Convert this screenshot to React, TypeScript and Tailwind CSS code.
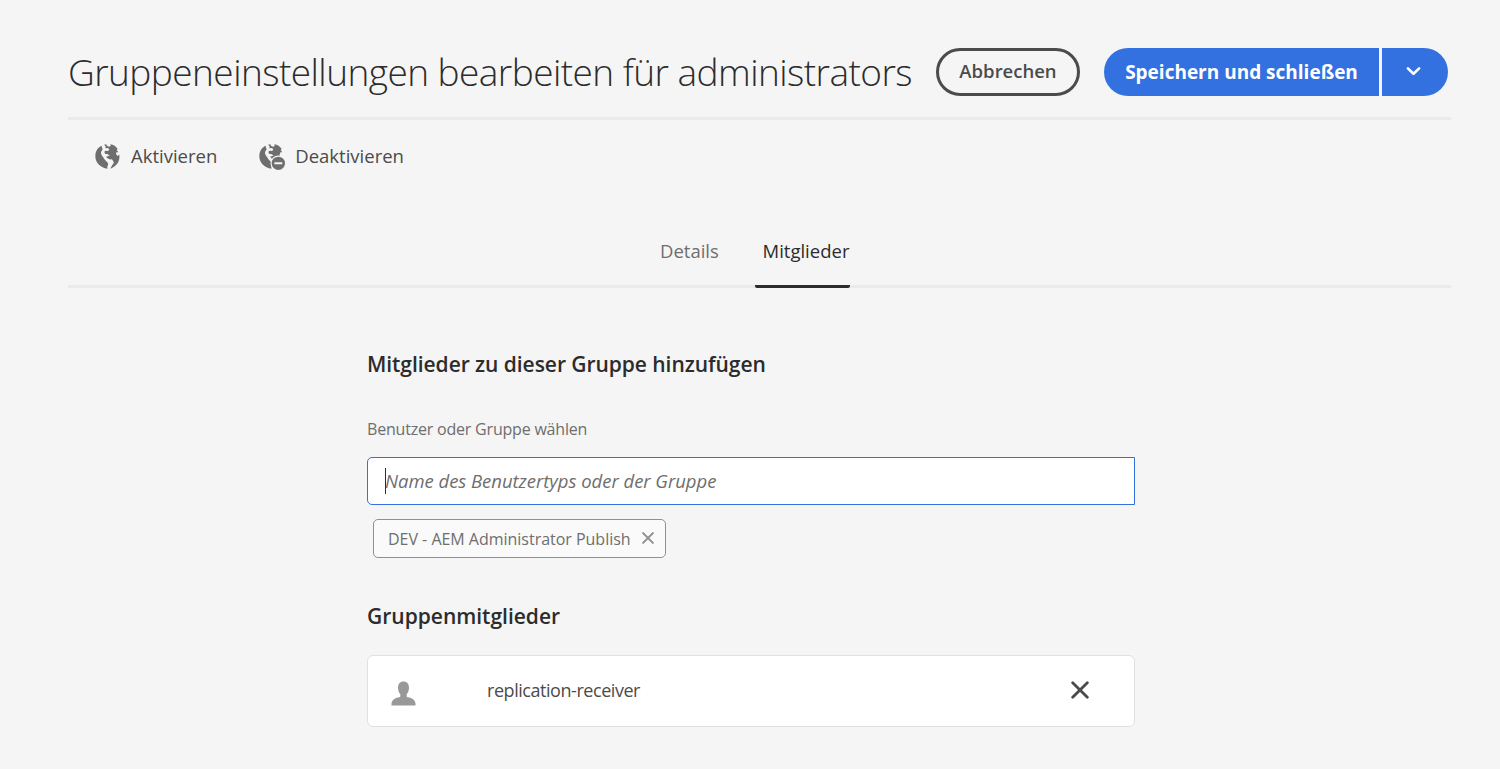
import type { ReactNode } from "react";

const LEFT_LAND =
  "M29 17C17 22 10 34 10 48c0 20 15 35 37 38.500C44 79 50 76 48 70C45 64 38 60 35 54C32 48 27 45 27 39C27 34 31 31 32 27C30 24 29 20 29 17Z";
const NORTH_LAND =
  "M36 14.500L43 12.500L45 17L51 20L56 18L55 12.500C65 14 72 19 77 27L74 30L79 37L73 37L72 42L64 44L60 48L52 47L48 43L39 41L37 35L41 32L49 33L52 27L46 24L40 25L41 19Z";
const SOUTH_LAND =
  "M42 50L52 47L60 43L72 41L76 48L82 44C85 63 73 80 55 86C59 79 60 74 66 68C63 65 64 61 59 58C52 59 48 56 42 50Z";

function Globe() {
  return (
    <svg viewBox="0 0 96 96" className="size-8 fill-[#6e6e6e]" aria-hidden="true">
      <path d={LEFT_LAND} />
      <path d={NORTH_LAND} />
      <path d={SOUTH_LAND} />
    </svg>
  );
}

function GlobeRemove() {
  return (
    <svg viewBox="0 0 96 96" className="size-8 fill-[#6e6e6e]" aria-hidden="true">
      <path d={LEFT_LAND} />
      <path d={NORTH_LAND} />
      <path d="M42 50L52 47L60 43L70 42L72 48L60 60L48 56Z" />
      <circle cx="67" cy="70" r="23.500" className="fill-[#f5f5f5]" />
      <circle cx="67" cy="70" r="20" />
      <rect x="55" y="67" width="24" height="6" rx="1" className="fill-[#f5f5f5]" />
    </svg>
  );
}

function Action({ icon, children }: { icon: ReactNode; children: ReactNode }) {
  return (
    <button className="flex h-8 items-center gap-[7px] text-[#4b4b4b]">
      {icon}
      <span>{children}</span>
    </button>
  );
}

function Cross({ className }: { className: string }) {
  return (
    <svg viewBox="0 0 18 18" fill="none" stroke="currentColor" strokeLinecap="round" className={className} aria-hidden="true">
      <path d="M1.700 1.700L16.300 16.300M16.300 1.700L1.700 16.300" />
    </svg>
  );
}

export default function App() {
  return (
    <div className="h-[769px] overflow-hidden bg-[#f5f5f5] pr-[49px] pl-[68px] font-['Open_Sans',sans-serif] text-[18.5px] leading-8 whitespace-nowrap text-[#4b4b4b]">
      <header className="flex h-[120px] items-start border-b-[3px] border-[#eaeaea] pt-12">
        <h1 className="w-[868px] text-[37px] leading-[48px] font-light tracking-[-0.55px] text-[#2c2c2c]">
          Gruppeneinstellungen bearbeiten für administrators
        </h1>
        <button className="h-12 w-36 rounded-full border-[3px] border-[#4b4b4b] pb-[3px] font-semibold">
          Abbrechen
        </button>
        <button className="ml-6 h-12 w-[275px] rounded-l-full bg-[#3471e0] pb-px text-[19px] font-bold text-white">
          Speichern und schließen
        </button>
        <button className="ml-[3px] flex h-12 w-[66px] items-center rounded-r-full bg-[#3471e0] pl-6 text-white" aria-label="Mehr">
          <svg viewBox="0 0 16 10" fill="none" stroke="currentColor" strokeWidth="2.800" strokeLinecap="round" strokeLinejoin="round" className="mb-[3px] h-[10px] w-[15px]" aria-hidden="true">
            <path d="M2 2.200L8 8L14 2.200" />
          </svg>
        </button>
      </header>

      <div className="flex gap-[39px] pt-5 pl-6">
        <Action icon={<Globe />}>Aktivieren</Action>
        <Action icon={<GlobeRemove />}>Deaktivieren</Action>
      </div>

      <nav className="mt-[49px] flex h-[67px] border-b-[3px] border-[#eaeaea] pt-[14px] pl-[592px]">
        <button className="mr-[34px] h-8 w-[61px] text-left text-[#6e6e6e]">Details</button>
        <button className="h-[53px] w-[95px] rounded-b-xs border-b-[3px] border-[#2c2c2c] pb-[18px] pl-[7.5px] text-left text-[#2c2c2c]">
          Mitglieder
        </button>
      </nav>

      <main className="ml-[299px] w-[768px]">
        <h2 className="pt-[60px] text-[21px] font-semibold tracking-[-0.05px] text-[#2c2c2c]">Mitglieder zu dieser Gruppe hinzufügen</h2>
        <label className="mt-[33px] block text-base leading-8 tracking-[-0.2px] text-[#6e6e6e]">
          Benutzer oder Gruppe wählen
        </label>
        <div className="mt-3 flex h-12 items-center rounded-l-[5px] border border-[#3471e0] bg-white pl-[17px] text-[#6e6e6e] italic">
          <span className="-mr-px h-[26px] w-px bg-[#2c2c2c]" />
          <span className="tracking-[-0.03px]">Name des Benutzertyps oder der Gruppe</span>
        </div>
        <div className="mt-[14px] ml-[6px] flex h-[39px] w-[293px] items-center rounded-[5px] border border-[#909090] bg-[#fafafa] pl-[14px] text-base text-[#6e6e6e]">
          <span className="w-[254px] tracking-[-0.02px]">DEV - AEM Administrator Publish</span>
          <Cross className="mb-px size-3 stroke-[3] text-[#8e8e8e]" />
        </div>
        <h2 className="mt-[42px] text-[21px] font-semibold text-[#2c2c2c]">Gruppenmitglieder</h2>
        <div className="mt-[23px] flex h-[72px] items-center rounded-md border border-[#e1e1e1] bg-white pl-[23px]">
          <svg viewBox="0 0 25 25" className="mt-[5px] h-[25px] w-[25px] fill-[#999]" aria-hidden="true">
            <path d="M12.500 0.500C8.800 0.500 7 3.200 7 6.800C7 9.500 8 11.900 9.300 13.300V15.300C9.300 15.900 9 16.200 8.300 16.300C3.500 17 0.500 19.500 0.500 23V24.500H24.500V23C24.500 19.500 21.500 17 16.700 16.300C16 16.200 15.700 15.900 15.700 15.300V13.300C17 11.900 18 9.500 18 6.800C18 3.200 16.200 0.500 12.500 0.500Z" />
          </svg>
          <span className="mb-[2px] ml-[71px] w-[583.5px] text-[18px] tracking-[-0.45px]">replication-receiver</span>
          <Cross className="mb-[3px] size-[18px] stroke-[2.800] text-[#4b4b4b]" />
        </div>
      </main>
    </div>
  );
}
